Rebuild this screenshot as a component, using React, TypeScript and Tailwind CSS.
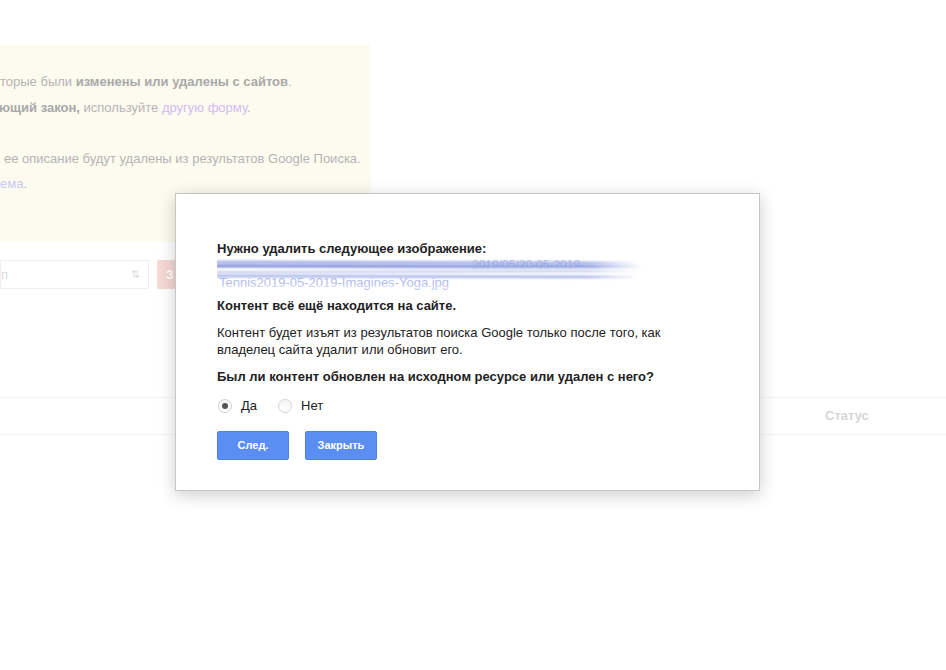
import type { ReactNode } from 'react'

// Faded page behind the dialog + the "remove outdated content" dialog on top.

function Radio({ checked, children }: { checked?: boolean; children: ReactNode }) {
  return (
    <label className="flex items-center gap-[9px]">
      <span className="flex h-[14px] w-[14px] items-center justify-center rounded-full border border-[#d4d4d4] bg-gradient-to-b from-[#f4f4f4] to-white">
        {checked && <span className="h-[6px] w-[6px] rounded-full bg-[#555]" />}
      </span>
      <span className="text-[13px] text-[#222]">{children}</span>
    </label>
  )
}

function Redacted() {
  return (
    <div className="relative h-[34px] w-[430px]">
      <p className="text-[12px] leading-[17px] text-[#c3caf0] whitespace-nowrap pl-[255px]">2019/05/20-05-2019-</p>
      <p className="text-[13px] leading-[17px] text-[#b3bcec] whitespace-nowrap pl-[2px]">Tennis2019-05-2019-Imagines-Yoga.jpg</p>
      <svg className="absolute inset-0" width="430" height="34" viewBox="0 0 430 34">
        <defs>
          <filter id="bl" x="-5%" y="-50%" width="110%" height="200%">
            <feGaussianBlur stdDeviation="0.8" />
          </filter>
          <linearGradient id="fade" x1="0" x2="1" y1="0" y2="0">
            <stop offset="0" stopColor="#7d8fdc" />
            <stop offset="0.88" stopColor="#7d8fdc" />
            <stop offset="1" stopColor="#7d8fdc" stopOpacity="0" />
          </linearGradient>
        </defs>
        <g filter="url(#bl)" strokeLinecap="round" fill="none">
          <path d="M0 5 L420 6" stroke="url(#fade)" strokeWidth="2.5" opacity="0.75" />
          <path d="M0 9 L425 10" stroke="url(#fade)" strokeWidth="3.5" opacity="0.9" />
          <path d="M0 13 L415 12" stroke="#ffffff" strokeWidth="2" opacity="0.8" />
          <path d="M0 15 L418 14" stroke="url(#fade)" strokeWidth="2" opacity="0.55" />
          <path d="M0 19 L420 20" stroke="url(#fade)" strokeWidth="2.5" opacity="0.7" />
          <path d="M40 22 L425 22" stroke="url(#fade)" strokeWidth="2" opacity="0.45" />
          <path d="M0 30 L430 30" stroke="#ffffff" strokeWidth="2" opacity="0.6" />
        </g>
      </svg>
    </div>
  )
}

export default function App() {
  return (
    <div className="relative h-[670px] w-[946px] overflow-hidden bg-white font-['Liberation_Sans',Arial,sans-serif]">
      {/* Background page (faded) */}
      <div className="flex flex-col">
        <div className="mt-[45px] h-[197px] w-[370px] bg-[#fdfaef] pt-[24px] text-[13px] text-[#b5b5b5] whitespace-nowrap">
          <p className="leading-[26px]">
            торые были <b className="text-[#a9a9a9]">изменены или удалены с сайтов</b>.
          </p>
          <p className="leading-[26px] -ml-[1px]">
            <b className="text-[#a9a9a9]">ющий закон,</b> используйте <span className="text-[#d2bdf4]">другую форму</span>.
          </p>
          <p className="mt-[25px] pl-[4px] leading-[25px]">ее описание будут удалены из результатов Google Поиска.</p>
          <p className="leading-[25px]">
            <span className="text-[#c6cbf4]">ема</span>.
          </p>
        </div>

        <div className="mt-[18px] flex items-center gap-[8px]">
          <div className="flex h-[29px] w-[149px] items-center justify-between border border-[#efefef] pr-[8px] text-[13px] text-[#dcdcdc]">
            <span>п</span>
            <span className="text-[11px]">⇅</span>
          </div>
          <div className="flex h-[29px] w-[40px] items-center rounded-[2px] bg-[#f3d8d4] pl-[9px] text-[12px] font-bold text-white">
            З
          </div>
        </div>

        <div className="mt-[108px] flex h-[38px] items-center border-y border-[#f4f4f4]">
          <span className="ml-[825px] text-[13px] font-bold text-[#d6d6d6]">Статус</span>
        </div>
      </div>

      {/* Dialog */}
      <div className="absolute left-[175px] top-[193px] w-[585px] border border-[#c6c6c6] bg-white pl-[41px] pt-[46px] pb-[30px] shadow-[0_4px_16px_rgba(0,0,0,0.2)]">
        <p className="text-[13px] font-bold leading-[17px] text-[#222]">Нужно удалить следующее изображение:</p>
        <Redacted />
        <p className="mt-[6px] text-[13px] font-bold leading-[17px] text-[#222]">Контент всё ещё находится на сайте.</p>
        <p className="mt-[10px] w-[470px] text-[13px] leading-[17px] text-[#222]">
          Контент будет изъят из результатов поиска Google только после того, как владелец сайта удалит или обновит его.
        </p>
        <p className="mt-[10px] text-[13px] font-bold leading-[17px] text-[#222]">
          Был ли контент обновлен на исходном ресурсе или удален с него?
        </p>
        <div className="mt-[12px] flex h-[18px] items-center gap-[21px] pl-[1px]">
          <Radio checked>Да</Radio>
          <Radio>Нет</Radio>
        </div>
        <div className="mt-[16px] flex gap-[16px]">
          <button className="h-[29px] w-[72px] rounded-[2px] border border-[#4e84ea] bg-[#5a8ef3] text-[11px] font-bold text-white">
            След.
          </button>
          <button className="h-[29px] w-[72px] rounded-[2px] border border-[#4e84ea] bg-[#5a8ef3] text-[11px] font-bold text-white">
            Закрыть
          </button>
        </div>
      </div>
    </div>
  )
}
